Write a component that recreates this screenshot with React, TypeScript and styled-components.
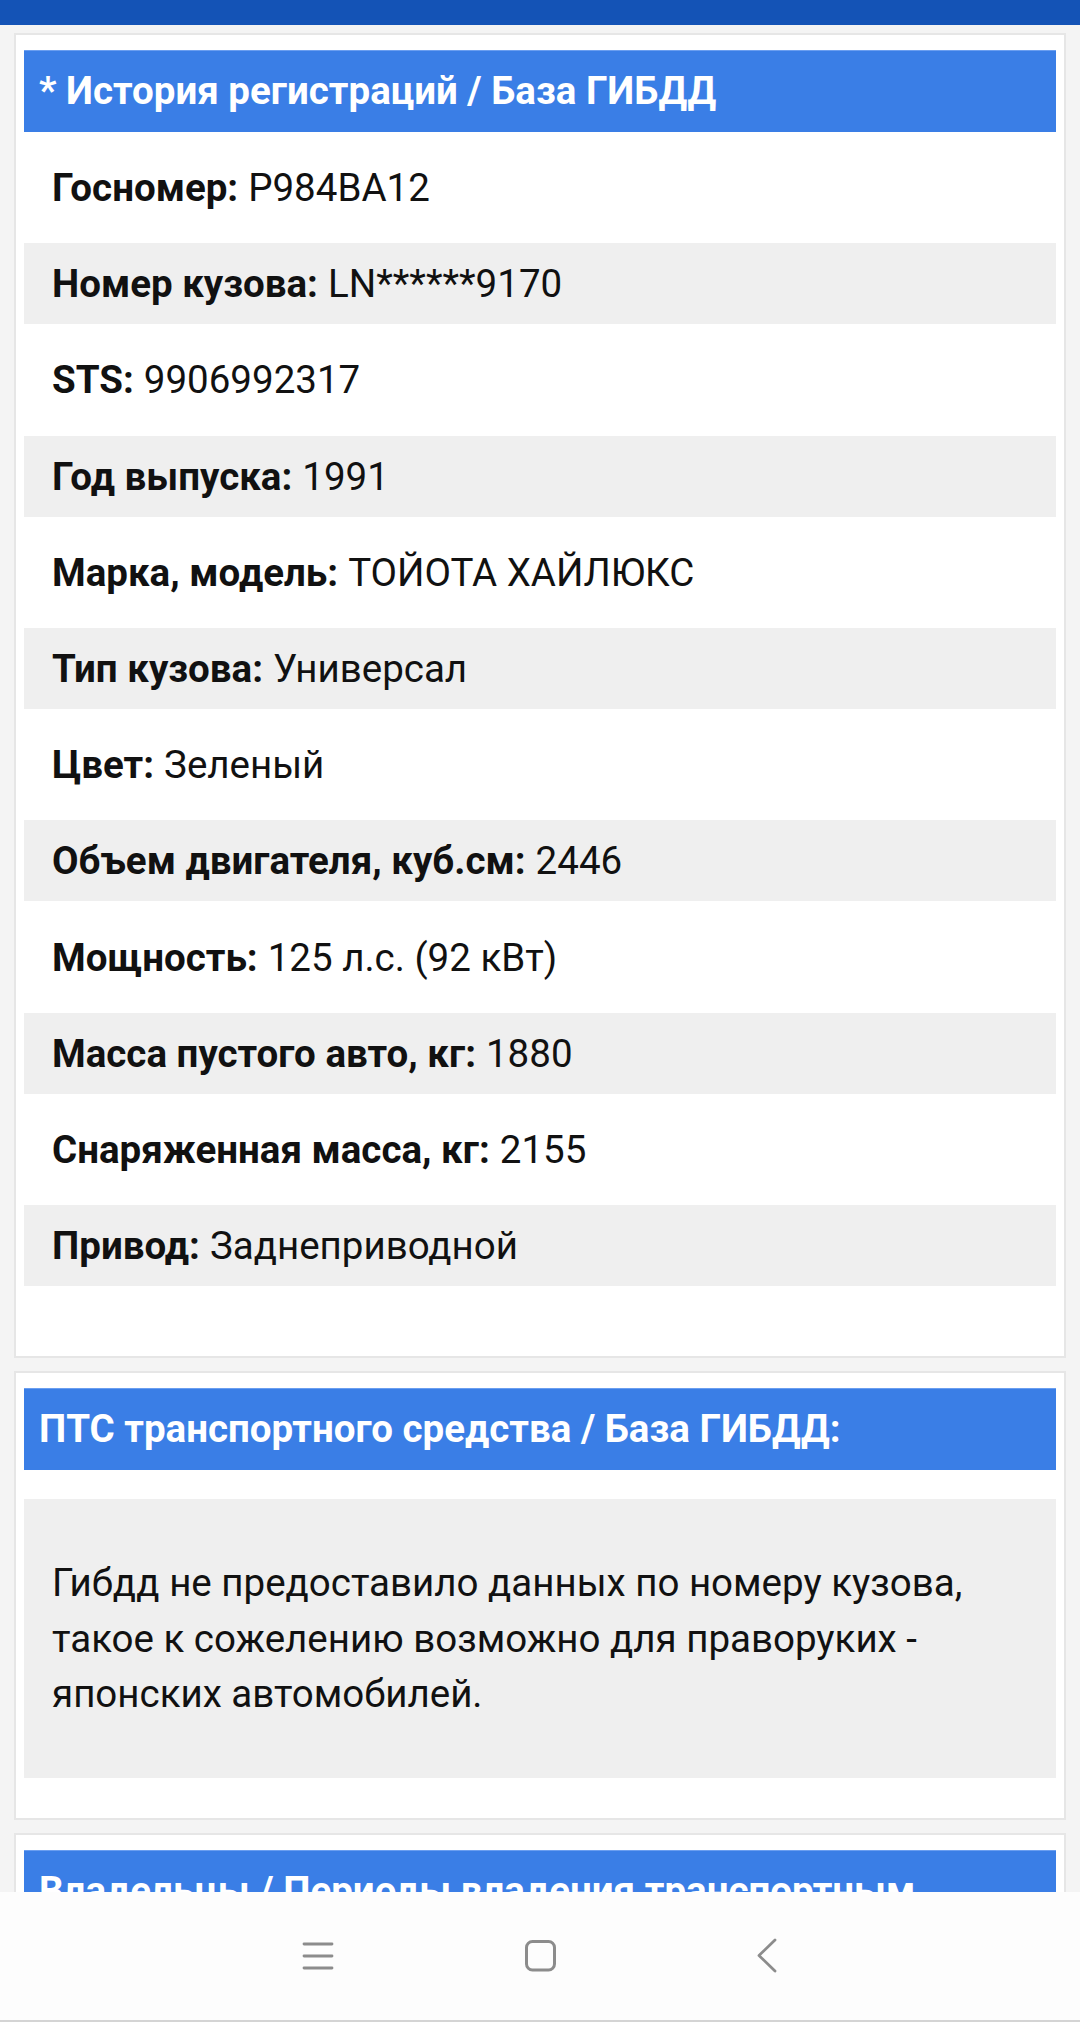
import React from "react";
import styled, { createGlobalStyle } from "styled-components";

interface Detail {
  label: string;
  value: string;
}

const GlobalStyle = createGlobalStyle`
  html, body {
    margin: 0;
    padding: 0;
    background: #f4f4f4;
  }
  body {
    font-family: Roboto, "Noto Sans", Arial, sans-serif;
    color: #111;
  }
`;

const Screen = styled.div`
  width: 1080px;
  height: 2022px;
  display: flex;
  flex-direction: column;
  overflow: hidden;
  background: #f4f4f4;
`;

const StatusBar = styled.div`
  flex: 0 0 25px;
  background: #1453b6;
`;

const Content = styled.div`
  flex: 1 1 auto;
  overflow: hidden;
  padding: 8px 14px 0;
  display: flex;
  flex-direction: column;
  gap: 13px;
`;

const Card = styled.section<{ $bottom: number }>`
  flex: 0 0 auto;
  background: #fff;
  border: 2px solid #e6e6e6;
  padding: 15px 8px ${(p) => p.$bottom}px;
`;

const Header = styled.h2`
  margin: 0;
  background: #3a7ee6;
  border-top: 1px solid #6a9ef0;
  color: #fff;
  font-family: Roboto, "Noto Sans", Arial, sans-serif;
  font-weight: 700;
  font-size: 38.5px;
  line-height: 42px;
  padding: 19px 15px 20px;
`;

const Rows = styled.div`
  display: flex;
  flex-direction: column;
  gap: 15.2px;
  padding: 15px 0 30px;
`;

const Row = styled.div<{ $shaded: boolean }>`
  height: 81px;
  display: flex;
  align-items: center;
  padding: 0 28px;
  background: ${(p) => (p.$shaded ? "#efefef" : "transparent")};
  font-size: 38.5px;
  color: #111;
  white-space: nowrap;
`;

const Label = styled.b`
  font-weight: 700;
  margin-right: 10px;
`;

const Note = styled.div`
  margin-top: 29px;
  background: #efefef;
  padding: 56px 28px;
  font-size: 38.5px;
  line-height: 55.5px;
  color: #111;
`;

const NavBar = styled.nav`
  flex: 0 0 128px;
  background: #fdfdfd;
  border-bottom: 2px solid #d4d4d4;
  display: flex;
  align-items: center;
  justify-content: center;
  gap: 180px;
`;

const NavIcon = styled.svg`
  width: 44px;
  height: 44px;
  display: block;
`;

const details: Detail[] = [
  { label: "Госномер:", value: "Р984ВА12" },
  { label: "Номер кузова:", value: "LN******9170" },
  { label: "STS:", value: "9906992317" },
  { label: "Год выпуска:", value: "1991" },
  { label: "Марка, модель:", value: "ТОЙОТА ХАЙЛЮКС" },
  { label: "Тип кузова:", value: "Универсал" },
  { label: "Цвет:", value: "Зеленый" },
  { label: "Объем двигателя, куб.см:", value: "2446" },
  { label: "Мощность:", value: "125 л.с. (92 кВт)" },
  { label: "Масса пустого авто, кг:", value: "1880" },
  { label: "Снаряженная масса, кг:", value: "2155" },
  { label: "Привод:", value: "Заднеприводной" },
];

const App: React.FC = () => {
  return (
    <Screen>
      <GlobalStyle />
      <StatusBar />
      <Content>
        <Card $bottom={40}>
          <Header>* История регистраций / База ГИБДД</Header>
          <Rows>
            {details.map((d, i) => (
              <Row key={d.label} $shaded={i % 2 === 1}>
                <Label>{d.label}</Label>
                {d.value}
              </Row>
            ))}
          </Rows>
        </Card>

        <Card $bottom={40}>
          <Header>ПТС транспортного средства / База ГИБДД:</Header>
          <Note>
            Гибдд не предоставило данных по номеру кузова, такое к сожелению
            возможно для праворуких - японских автомобилей.
          </Note>
        </Card>

        <Card $bottom={40}>
          <Header>Владельцы / Периоды владения транспортным средством</Header>
        </Card>
      </Content>

      <NavBar>
        <NavIcon viewBox="0 0 44 44">
          <g stroke="#8c8c8c" strokeWidth="2.8" strokeLinecap="round">
            <line x1="10" y1="10" x2="38" y2="10" />
            <line x1="10" y1="22" x2="38" y2="22" />
            <line x1="10" y1="34" x2="38" y2="34" />
          </g>
        </NavIcon>
        <NavIcon viewBox="0 0 44 44">
          <rect x="8.5" y="7.5" width="28" height="28.5" rx="6" fill="none" stroke="#8c8c8c" strokeWidth="3" />
        </NavIcon>
        <NavIcon viewBox="0 0 44 44">
          <polyline points="33,6 17,21.5 33,37" fill="none" stroke="#8c8c8c" strokeWidth="2.8" strokeLinecap="round" strokeLinejoin="round" />
        </NavIcon>
      </NavBar>
    </Screen>
  );
};

export default App;
